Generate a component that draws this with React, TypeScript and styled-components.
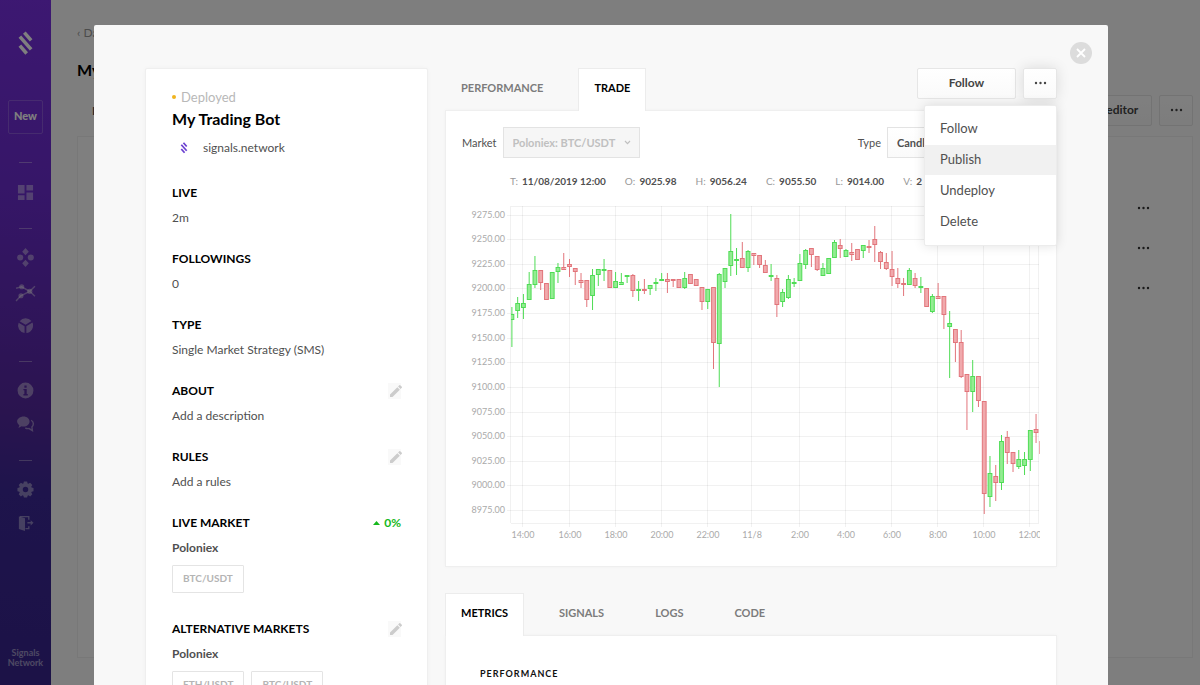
import React from "react";
import styled, { createGlobalStyle, css } from "styled-components";

const GlobalStyle = createGlobalStyle`
  *, *::before, *::after { box-sizing: border-box; }
  body {
    margin: 0;
    background: #fdfdfd;
    color: #505050;
    font-family: Lato, "Open Sans", sans-serif;
    font-size: 14px;
    line-height: 25px;
    overflow: hidden;
  }
  button, select { font-family: inherit; color: inherit; margin: 0; }
  h1, h2, h3, p, ul { margin: 0; padding: 0; }
  ul { list-style: none; }
`;

/* ---------- application shell ---------- */

const Shell = styled.div`
  display: flex;
  height: 100vh;
  overflow: hidden;
`;

const Sidebar = styled.nav`
  display: flex;
  flex-direction: column;
  align-items: center;
  flex: none;
  width: 51px;
  padding: 31px 0 17px;
  background: linear-gradient(185deg, #7a30e4 0%, #6c2cd0 28%, #55289f 60%, #3c2898 72%, #38248e 100%);
  color: #fff;
`;

const NewButton = styled.button`
  width: 35px;
  height: 34px;
  margin: 44px 0 2px;
  padding: 0 0 3px;
  border: 1px solid rgba(255, 255, 255, 0.2);
  border-radius: 2px;
  background: transparent;
  color: #fff;
  font-size: 11px;
  font-weight: 900;
`;

const NavGroup = styled.div<{ $gap: number }>`
  display: flex;
  flex-direction: column;
  align-items: center;
  gap: ${(p) => p.$gap}px;
  margin-top: 26px;

  &::before {
    content: "";
    width: 13px;
    height: 1px;
    background: rgba(255, 255, 255, 0.35);
  }
`;

const NavItems = styled.div`
  display: flex;
  flex-direction: column;
  gap: 16px;
`;

const NavLink = styled.a`
  display: block;
  width: 20px;
  height: 18px;
  color: rgba(255, 255, 255, 0.42);
  svg { display: block; margin: 0 auto; overflow: visible; }
`;

const Brand = styled.p`
  margin-top: auto;
  color: rgba(255, 255, 255, 0.5);
  font-size: 9px;
  font-weight: 700;
  line-height: 10px;
  text-align: center;
`;

const Content = styled.main`
  display: flex;
  flex: 1;
  flex-direction: column;
  min-width: 0;
  padding: 20px 7px 27px 26px;
`;

const BackLink = styled.a`
  color: #999;
  font-size: 12px;
  text-decoration: none;
`;

const PageTitle = styled.h1`
  margin-top: 12px;
  color: #000;
  font-size: 16px;
  font-weight: 700;
  line-height: 25px;
`;

const PageBar = styled.div`
  display: flex;
  align-items: center;
  justify-content: space-between;
  margin-top: 13px;
  padding-left: 15px;
  font-size: 12px;
  font-weight: 700;
`;

const ButtonGroup = styled.div`
  position: relative;
  display: flex;
  gap: 7px;
`;

const PagePanel = styled.section`
  display: flex;
  flex: 1;
  flex-direction: column;
  align-items: flex-end;
  gap: 15px;
  margin-top: 10px;
  padding: 58px 42px 0;
  border: 1px solid #f0f0f0;
  background: #fff;
`;

const RowButton = styled.button`
  display: flex;
  align-items: center;
  height: 25px;
  padding: 0;
  border: 0;
  background: none;
  color: #333;
`;

/* ---------- modal ---------- */

const Backdrop = styled.div`
  position: fixed;
  inset: 0;
  padding: 25px 92px 0 94px;
  overflow: hidden;
  background: rgba(0, 0, 0, 0.5);
`;

const Modal = styled.div`
  position: relative;
  display: flex;
  align-items: flex-start;
  gap: 17px;
  min-height: 100%;
  padding: 43px 51px;
  border-radius: 2px;
  background: #f8f8f8;
`;

const CloseButton = styled.button`
  position: absolute;
  top: 17px;
  right: 16px;
  display: grid;
  place-items: center;
  width: 22px;
  height: 22px;
  padding: 0;
  border: 0;
  border-radius: 50%;
  background: #dcdcdc;
  color: #fff;
`;

const cardFrame = css`
  border: 1px solid #efefef;
  background: #fff;
  box-shadow: 0 0 4px rgba(0, 0, 0, 0.03);
`;

const InfoCard = styled.aside`
  ${cardFrame}
  flex: none;
  width: 283px;
  padding: 17px 26px 40px;
  border-radius: 2px;
`;

const Status = styled.p`
  display: flex;
  align-items: center;
  gap: 5px;
  color: #b8b8b8;
  font-size: 13px;
  line-height: 22px;

  &::before {
    content: "";
    width: 4px;
    height: 4px;
    border-radius: 50%;
    background: #f0b41e;
  }
`;

const BotName = styled.h2`
  color: #000;
  font-size: 16px;
  font-weight: 700;
  line-height: 22px;
`;

const Owner = styled.p`
  display: flex;
  align-items: center;
  gap: 14px;
  margin: 5px 0 20px;
  padding-left: 7px;
`;

const OwnerMark = styled.span`
  display: flex;
  color: #6a3fd0;
`;

const Section = styled.section`
  margin-bottom: 16px;
`;

const SectionHead = styled.div`
  display: flex;
  align-items: center;
  justify-content: space-between;
`;

const SectionTitle = styled.h3`
  color: #000;
  font-size: 12px;
  font-weight: 700;
  line-height: 25px;
`;

const Value = styled.p<{ $strong?: boolean }>`
  font-size: 12px;
  font-weight: ${(p) => (p.$strong ? 700 : 400)};
`;

const EditButton = styled.button`
  display: grid;
  place-items: center;
  width: 13px;
  height: 16px;
  padding: 0;
  border: 0;
  background: #f9f9f9;
  color: #ccc;
`;

const Gain = styled.span`
  display: flex;
  align-items: center;
  gap: 4px;
  color: #16b81c;
  font-size: 12px;
  font-weight: 700;
`;

const Tags = styled.ul`
  display: flex;
  gap: 7px;
  margin-top: 5px;
  padding-bottom: 7px;
`;

const Tag = styled.li`
  height: 28px;
  padding: 0 10px;
  border: 1px solid #e4e4e4;
  border-radius: 1px;
  color: #b4b4b4;
  font-size: 10px;
  font-weight: 700;
`;

const MainColumn = styled.div`
  flex: 1;
  min-width: 0;
`;

const TabBar = styled.div`
  display: flex;
  justify-content: space-between;
  align-items: flex-start;
`;

const TabList = styled.div`
  display: flex;
  gap: 19px;
`;

const Tab = styled.button<{ $active?: boolean }>`
  position: relative;
  height: 42px;
  padding: 0 15px 4px;
  border: 1px solid transparent;
  border-bottom: 0;
  background: transparent;
  color: #7c7c7c;
  font-size: 11px;
  font-weight: 700;

  ${(p) =>
    p.$active &&
    css`
      z-index: 1;
      height: 43px;
      margin-bottom: -1px;
      padding-bottom: 5px;
      border-color: #ececec;
      background: #fff;
      color: #000;
    `}
`;

const Button = styled.button<{ $width: number; $raised?: boolean }>`
  display: grid;
  place-items: center;
  width: ${(p) => p.$width}px;
  height: 31px;
  padding: 0 0 2px;
  border: 1px solid #e6e6e6;
  border-radius: 2px;
  background: linear-gradient(#fff, #fafafa);
  color: #444;
  font-size: 12px;
  font-weight: 700;
  box-shadow: ${(p) => (p.$raised ? "0 0 14px rgba(0, 0, 0, 0.12)" : "none")};
`;

const Menu = styled.ul`
  position: absolute;
  z-index: 2;
  top: 37px;
  right: 0;
  width: 133px;
  padding: 8px 0;
  border: 1px solid #ececec;
  border-radius: 2px;
  background: #fff;
  box-shadow: 0 0 12px rgba(0, 0, 0, 0.12);
`;

const MenuItem = styled.button<{ $active?: boolean }>`
  display: block;
  width: 100%;
  height: 30px;
  padding: 0 15px 2px;
  border: 0;
  background: ${(p) => (p.$active ? "#f1f1f1" : "transparent")};
  font-size: 13px;
  text-align: left;

  li + li & { margin-top: 1px; }
`;

const Panel = styled.section`
  ${cardFrame}
  margin-bottom: 26px;
`;

const TradeBody = styled.div`
  padding: 16px 16px 21px 14px;
`;

const Toolbar = styled.div`
  display: flex;
  align-items: center;
  justify-content: space-between;
  padding-left: 2px;
`;

const Field = styled.label`
  display: flex;
  align-items: center;
  gap: 6px;
  font-size: 11px;
`;

const SelectWrap = styled.span<{ $width: number; $off?: boolean }>`
  display: flex;
  align-items: center;
  width: ${(p) => p.$width}px;
  height: 31px;
  padding: 0 8px 0 9px;
  border: 1px solid #e3e3e3;
  background: ${(p) => (p.$off ? "#f6f6f6" : "linear-gradient(#fff, #fafafa)")};
  color: ${(p) => (p.$off ? "#c0c0c0" : "#505050")};

  select {
    flex: 1;
    min-width: 0;
    padding: 0;
    border: 0;
    appearance: none;
    background: transparent;
    color: inherit;
    font-size: 11px;
    font-weight: 700;
    opacity: 1;
  }
`;

const Quote = styled.dl`
  display: flex;
  gap: 19px;
  margin: 13px 0 9px 50px;
  font-size: 10px;
  line-height: 20px;
  white-space: nowrap;

  div { display: flex; gap: 4px; }
  dt { color: #999; }
  dd { margin: 0; font-weight: 700; }
`;

const ChartSvg = styled.svg`
  display: block;
  width: 100%;
  height: auto;

  text { fill: #aaa; font-size: 9px; }
`;

const MetricsBody = styled.div`
  min-height: 120px;
  padding: 28px 34px;
`;

const MetricsTitle = styled.h3`
  color: #111;
  font-size: 9px;
  font-weight: 700;
  letter-spacing: 1px;
  line-height: 20px;
`;

/* ---------- icons ---------- */

const Logo = ({ size, width }: { size: number; width: number }) => (
  <svg width={width} height={size} viewBox="0 0 14 24" fill="none" stroke="currentColor" strokeWidth="3.4">
    <path d="M5.9 1.6 12.4 9" />
    <path d="M1.6 5.4 12.4 17.6" />
    <path d="M1.6 14 8.1 21.6" />
  </svg>
);

const Dots = () => (
  <svg width="13" height="4" viewBox="0 0 13 4" fill="currentColor" aria-hidden="true">
    <circle cx="2" cy="2" r="1.2" />
    <circle cx="6.5" cy="2" r="1.2" />
    <circle cx="11" cy="2" r="1.2" />
  </svg>
);

const Chevron = () => (
  <svg width="7" height="5" viewBox="0 0 7 5" fill="none" stroke="currentColor" strokeWidth="1.2" aria-hidden="true">
    <path d="M1 1 3.5 3.6 6 1" />
  </svg>
);

const Pencil = () => (
  <svg width="16" height="16" viewBox="0 0 24 24" fill="currentColor" aria-hidden="true">
    <path d="M3 17.25V21h3.75L17.81 9.94l-3.75-3.75L3 17.25zM20.71 7.04a1 1 0 0 0 0-1.41l-2.34-2.34a1 1 0 0 0-1.41 0l-1.83 1.83 3.75 3.75 1.83-1.83z" />
  </svg>
);

const navIcons: Record<string, React.ReactNode> = {
  Dashboard: <path d="M1 1h7v9H1zM10 1h7v6h-7zM1 12h7v5H1zM10 9h7v8h-7z" />,
  Strategies: (
    <>
      <path d="M9 -1 12.5 2.8 9 6.5 5.5 2.8zM9 11.5 12.5 15.2 9 19 5.5 15.2z" />
      <circle cx="3.4" cy="9" r="3.2" />
      <circle cx="14.6" cy="9" r="3.2" />
    </>
  ),
  Signals: (
    <>
      <path d="M-1 5.5 5 4 13.5 8.8 19 14M19 3.5 13.5 8.8 4 13.5-1 19" fill="none" stroke="currentColor" strokeWidth="1.5" />
      <circle cx="5" cy="4" r="2.7" />
      <circle cx="13.5" cy="8.8" r="2.8" />
      <circle cx="4.2" cy="13.5" r="2.7" />
    </>
  ),
  Portfolio: (
    <>
      <path d="M9.1 8.2 2.8 4.4A8 8 0 0 1 15.3 4.3zM1.7 6 8 9.7V17A8 8 0 0 1 1.7 6z" />
      <path d="M9.9 9.7 16.4 5.9A8 8 0 0 1 9.9 17z" />
    </>
  ),
  Help: (
    <path
      fillRule="evenodd"
      d="M9 .6a8.4 8.4 0 1 1 0 16.8A8.4 8.4 0 0 1 9 .6zM7.8 3.8v2.4h2.4V3.8zM6.8 7.4v1.4h1v4H6.8v1.4h4.600v-1.400h-1.100V7.400z"
    />
  ),
  Chat: (
    <>
      <path d="M7 .5c3.6 0 6.3 2.3 6.3 5.3S10.6 11.2 7 11.2c-.8 0-1.5-.1-2.2-.3L1.5 12.6l1-2.9C1.3 8.7.1 7.3.1 5.8c0-3 3.3-5.3 6.9-5.3z" />
      <path d="M15 4.5c1.6.9 2.3 2.2 2.3 3.8 0 1.4-.6 2.5-1.5 3.4l.5 3.8-3.5-2.2c-1.5.2-2.8 0-4-.6" fill="none" stroke="currentColor" strokeWidth="1.5" />
    </>
  ),
  Settings: (
    <path
      fillRule="evenodd"
      d="M7.3.6h3.4l.5 2 .9.4 1.8-1.1 2.3 2.3-1.1 1.8.4.9 2 .5v3.4l-2 .5-.4.9 1.1 1.8-2.3 2.3-1.8-1.1-.9.4-.5 2H7.3l-.5-2-.9-.4-1.8 1.1L1.8 14l1.100-1.800-.4-.9-2-.5V7.400l2-.5.4-.9L1.800 4.200l2.300-2.300L5.900 3l.9-.4zM9 6.200a2.900 2.900 0 1 0 0 5.800 2.900 2.900 0 0 0 0-5.800z"
    />
  ),
  "Sign out": (
    <>
      <path d="M2 1.5 8.5 3.5V17L2 14.7z" />
      <path d="M3 1.7h9.5V5M12.5 12v2.5H9" fill="none" stroke="currentColor" strokeWidth="1.4" />
      <path d="M11 7.5h3.5V5.5l3 2.8-3 2.7V9H11z" />
    </>
  ),
};

const navGroups: { gap: number; items: string[] }[] = [
  { gap: 21, items: ["Dashboard"] },
  { gap: 20, items: ["Strategies", "Signals", "Portfolio"] },
  { gap: 20, items: ["Help", "Chat"] },
  { gap: 20, items: ["Settings", "Sign out"] },
];

/* ---------- chart ---------- */

type Candle = [high: number, top: number, bottom: number, low: number, up: 0 | 1];

const candles: Candle[] = [
  [107, 114, 120, 147, 1], [97, 103, 111, 118, 1], [94, 103, 108, 119, 1], [72, 84, 100, 100, 1],
  [56, 70, 85, 88, 1], [70, 70, 83, 90, 0], [83, 83, 100, 100, 0], [72, 72, 99, 99, 1],
  [63, 67, 72, 83, 1], [53, 67, 70, 70, 0], [59, 64, 67, 77, 0], [68, 68, 72, 85, 0],
  [73, 80, 83, 88, 0], [80, 80, 100, 107, 0], [69, 75, 96, 110, 1], [69, 69, 75, 86, 1],
  [59, 69, 71, 81, 1], [70, 70, 88, 88, 0], [72, 81, 88, 88, 1], [73, 82, 85, 85, 1],
  [75, 75, 77, 83, 1], [74, 75, 91, 97, 0], [81, 89, 91, 101, 1], [79, 89, 91, 94, 0],
  [85, 85, 89, 95, 1], [78, 82, 84, 91, 1], [73, 79, 81, 81, 1], [73, 79, 82, 93, 0],
  [79, 79, 81, 87, 0], [79, 79, 88, 88, 0], [72, 78, 88, 89, 1], [74, 74, 84, 84, 0],
  [79, 79, 86, 86, 0], [87, 87, 102, 110, 0], [89, 89, 102, 109, 1], [87, 87, 143, 169, 0],
  [73, 74, 144, 187, 1], [68, 68, 82, 88, 1], [14, 51, 66, 76, 1], [48, 59, 61, 75, 1],
  [42, 58, 68, 68, 0], [50, 51, 68, 72, 1], [53, 53, 56, 65, 0], [55, 55, 65, 68, 0],
  [60, 65, 73, 73, 0], [64, 75, 77, 81, 1], [75, 78, 105, 117, 0], [89, 92, 102, 107, 1],
  [75, 79, 98, 99, 1], [78, 82, 84, 87, 1], [54, 63, 81, 81, 1], [49, 50, 65, 69, 1],
  [48, 48, 55, 67, 0], [56, 56, 70, 71, 0], [63, 68, 76, 76, 1], [58, 58, 74, 74, 1],
  [40, 42, 58, 58, 1], [39, 45, 49, 58, 0], [49, 50, 57, 57, 1], [43, 52, 55, 61, 0],
  [49, 49, 60, 60, 0], [45, 45, 51, 58, 1], [40, 46, 48, 53, 0], [26, 39, 45, 62, 0],
  [51, 52, 62, 69, 0], [53, 62, 69, 70, 0], [51, 69, 77, 86, 0], [68, 78, 84, 88, 0],
  [78, 83, 85, 96, 0], [68, 70, 85, 85, 1], [73, 78, 86, 88, 0], [77, 86, 88, 93, 1],
  [88, 88, 107, 107, 0], [94, 96, 112, 113, 1], [83, 96, 99, 99, 0], [96, 96, 115, 129, 0],
  [111, 123, 127, 178, 1], [129, 129, 143, 162, 0], [130, 142, 177, 178, 0], [174, 174, 192, 230, 0],
  [160, 176, 192, 212, 1], [176, 176, 201, 207, 0], [201, 201, 294, 314, 0], [256, 273, 297, 307, 1],
  [265, 276, 283, 301, 0], [235, 241, 283, 290, 1], [231, 237, 253, 264, 0], [252, 252, 264, 272, 0],
  [250, 259, 267, 269, 1], [252, 259, 266, 275, 1], [230, 230, 260, 271, 1], [214, 229, 233, 243, 0],
  [241, 241, 254, 255, 0],
];

const prices = [
  "9275.00", "9250.00", "9225.00", "9200.00", "9175.00", "9150.00", "9125.00",
  "9100.00", "9075.00", "9050.00", "9025.00", "9000.00", "8975.00",
];

const times: [label: string, x: number][] = [
  ["14:00", 62], ["16:00", 109], ["18:00", 155], ["20:00", 201], ["22:00", 247], ["11/8", 291],
  ["2:00", 339], ["4:00", 385], ["6:00", 431], ["8:00", 477], ["10:00", 523], ["12:00", 569],
];

const priceY = (i: number) => Math.round(14.6 + i * 24.62);

const CandleChart = () => (
  <ChartSvg viewBox="0 0 580 345" role="img" aria-label="BTC/USDT candlestick chart">
    <defs>
      <clipPath id="plot"><rect x="51" y="0" width="529" height="323" /></clipPath>
    </defs>
    <g stroke="#000" strokeOpacity="0.055" shapeRendering="crispEdges">
      <path d="M51 6.5H579M51 323.5H579M50.5 6V323M578.5 6V323" />
      {prices.map((p, i) => <path key={p} d={`M47 ${priceY(i) + 0.5}H579`} />)}
      {times.map(([t, x]) => <path key={t} d={`M${x + 0.5} 6V327`} />)}
    </g>
    <g clipPath="url(#plot)">
      {candles.map(([high, top, bottom, low, up], i) => {
        const x = 51.9 + i * 5.76;
        return (
          <g key={i} stroke={up ? "#4fdc55" : "#e2757b"} fill={up ? "#93ec92" : "#f0a9ac"}>
            <path d={`M${x} ${high}V${low}`} />
            <rect x={x - 1.9} y={top + 0.5} width="3.8" height={Math.max(bottom - top - 1, 1)} />
          </g>
        );
      })}
    </g>
    {prices.map((p, i) => <text key={p} x="45" y={priceY(i) + 3} textAnchor="end">{p}</text>)}
    {times.map(([t, x]) => <text key={t} x={x + 1} y="338" textAnchor="middle">{t}</text>)}
  </ChartSvg>
);

/* ---------- page ---------- */

const quote = [
  ["T", "11/08/2019 12:00"], ["O", "9025.98"], ["H", "9056.24"],
  ["C", "9055.50"], ["L", "9014.00"], ["V", "2"],
];

const EditAction = ({ label }: { label: string }) => (
  <EditButton aria-label={label}><Pencil /></EditButton>
);

const InfoSection = ({ title, value, action, tags }: {
  title: string; value: string; action?: React.ReactNode; tags?: string[];
}) => (
  <Section>
    <SectionHead>
      <SectionTitle>{title}</SectionTitle>
      {action}
    </SectionHead>
    <Value $strong={Boolean(tags)}>{value}</Value>
    {tags && <Tags>{tags.map((t) => <Tag key={t}>{t}</Tag>)}</Tags>}
  </Section>
);

export default function App() {
  return (
    <>
      <GlobalStyle />
      <Shell>
        <Sidebar>
          <Logo size={25} width={15} />
          <NewButton>New</NewButton>
          {navGroups.map((group) => (
            <NavGroup key={group.items[0]} $gap={group.gap}>
              <NavItems>
                {group.items.map((name) => (
                  <NavLink key={name} href="#" aria-label={name}>
                    <svg width="17" height="17" viewBox="0 0 18 18" fill="currentColor">{navIcons[name]}</svg>
                  </NavLink>
                ))}
              </NavItems>
            </NavGroup>
          ))}
          <Brand>Signals<br />Network</Brand>
        </Sidebar>
        <Content>
          <BackLink href="#">‹ Dashboard</BackLink>
          <PageTitle>My Trading Bot</PageTitle>
          <PageBar>
            <span>Bots</span>
            <ButtonGroup>
              <Button $width={92}>Open editor</Button>
              <Button $width={34} aria-label="More"><Dots /></Button>
            </ButtonGroup>
          </PageBar>
          <PagePanel>
            {[1, 2, 3].map((n) => <RowButton key={n} aria-label={`Row ${n} actions`}><Dots /></RowButton>)}
          </PagePanel>
        </Content>
      </Shell>

      <Backdrop>
        <Modal role="dialog" aria-label="My Trading Bot">
          <CloseButton aria-label="Close">
            <svg width="10" height="10" viewBox="0 0 10 10" stroke="currentColor" strokeWidth="1.8">
              <path d="M1 1 9 9M9 1 1 9" />
            </svg>
          </CloseButton>

          <InfoCard>
            <Status>Deployed</Status>
            <BotName>My Trading Bot</BotName>
            <Owner>
              <OwnerMark><Logo size={12} width={10} /></OwnerMark>
              <Value as="span">signals.network</Value>
            </Owner>
            <InfoSection title="LIVE" value="2m" />
            <InfoSection title="FOLLOWINGS" value="0" />
            <InfoSection title="TYPE" value="Single Market Strategy (SMS)" />
            <InfoSection title="ABOUT" value="Add a description" action={<EditAction label="Edit about" />} />
            <InfoSection title="RULES" value="Add a rules" action={<EditAction label="Edit rules" />} />
            <InfoSection
              title="LIVE MARKET"
              value="Poloniex"
              tags={["BTC/USDT"]}
              action={
                <Gain>
                  <svg width="7" height="4" viewBox="0 0 7 4" fill="currentColor"><path d="M0 4 3.5 0 7 4z" /></svg>
                  0%
                </Gain>
              }
            />
            <InfoSection
              title="ALTERNATIVE MARKETS"
              value="Poloniex"
              tags={["ETH/USDT", "BTC/USDT"]}
              action={<EditAction label="Edit alternative markets" />}
            />
          </InfoCard>

          <MainColumn>
            <TabBar>
              <TabList role="tablist">
                <Tab role="tab">PERFORMANCE</Tab>
                <Tab role="tab" $active>TRADE</Tab>
              </TabList>
              <ButtonGroup>
                <Button $width={99}>Follow</Button>
                <Button $width={34} $raised aria-label="More actions"><Dots /></Button>
                <Menu>
                  {["Follow", "Publish", "Undeploy", "Delete"].map((item) => (
                    <li key={item}><MenuItem $active={item === "Publish"}>{item}</MenuItem></li>
                  ))}
                </Menu>
              </ButtonGroup>
            </TabBar>

            <Panel>
              <TradeBody>
                <Toolbar>
                  <Field>
                    Market
                    <SelectWrap $width={137} $off>
                      <select disabled><option>Poloniex: BTC/USDT</option></select>
                      <Chevron />
                    </SelectWrap>
                  </Field>
                  <Field>
                    Type
                    <SelectWrap $width={153}>
                      <select><option>Candlesticks</option></select>
                      <Chevron />
                    </SelectWrap>
                  </Field>
                </Toolbar>
                <Quote>
                  {quote.map(([k, v]) => <div key={k}><dt>{k}:</dt><dd>{v}</dd></div>)}
                </Quote>
                <CandleChart />
              </TradeBody>
            </Panel>

            <TabBar>
              <TabList role="tablist">
                <Tab role="tab" $active>METRICS</Tab>
                <Tab role="tab">SIGNALS</Tab>
                <Tab role="tab">LOGS</Tab>
                <Tab role="tab">CODE</Tab>
              </TabList>
            </TabBar>
            <Panel>
              <MetricsBody>
                <MetricsTitle>PERFORMANCE</MetricsTitle>
              </MetricsBody>
            </Panel>
          </MainColumn>
        </Modal>
      </Backdrop>
    </>
  );
}
